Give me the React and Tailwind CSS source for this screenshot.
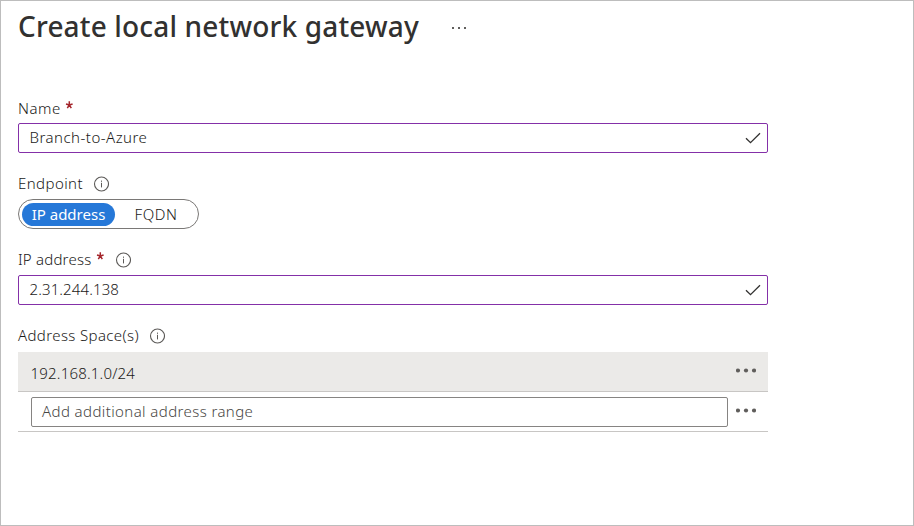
import React from 'react';

function InfoIcon({ className = '' }) {
  return (
    <svg viewBox="0 0 16 16" className={`h-4 w-4 shrink-0 ${className}`} fill="none" stroke="#5c5a58">
      <circle cx="8.5" cy="8" r="7" strokeWidth="1.1" />
      <path d="M8.5 6.8V11.4M8.5 4.6V5.8" strokeWidth="1" />
    </svg>
  );
}

function Required({ className = '' }) {
  return (
    <svg viewBox="0 0 8 8" className={`h-2 w-2 shrink-0 ${className}`} stroke="#a4262c" strokeWidth="1.5">
      <path d="M4.3 0.3V4M4.3 4L1 3M4.3 4L7.6 3M4.3 4L2.3 7.1M4.3 4L6.3 7.1" />
    </svg>
  );
}

function Check() {
  return (
    <svg viewBox="0 0 16 12" className="h-3 w-4 shrink-0" fill="none" stroke="#323130" strokeWidth="1.3">
      <path d="M1 6.2L5.5 10.7L15 1.2" />
    </svg>
  );
}

function MoreButton({ className = '' }) {
  return (
    <button type="button" aria-label="More" className={`h-[5px] w-5 shrink-0 ${className}`}>
      <svg viewBox="0 0 20 5" className="h-[5px] w-5" fill="#605e5c">
        <circle cx="2" cy="2.5" r="2.1" />
        <circle cx="10" cy="2.5" r="2.1" />
        <circle cx="18" cy="2.5" r="2.1" />
      </svg>
    </button>
  );
}

function Field({ children }) {
  return (
    <div className="flex h-[30px] items-center justify-between rounded-[2px] border border-[#8430a8] pr-1.5 pl-[10.5px]">
      {children}
      <Check />
    </div>
  );
}

export default function App() {
  return (
    <main className="h-[526px] w-[914px] overflow-hidden border border-[#bdbdbd] bg-white pl-[17px] font-['Noto_Sans','Open_Sans',sans-serif] text-[15px] leading-5 font-light whitespace-nowrap text-[#1b1a19]">
      <header className="flex h-[52px] items-center">
        <h1 className="w-[434px] pb-0.5 text-[28px] leading-[50px] font-medium tracking-[0.16px] text-[#323130]">Create local network gateway</h1>
        <button type="button" aria-label="More actions" className="mt-0.5 flex gap-1">
          <span className="h-0.5 w-0.5 bg-[#605e5c]" />
          <span className="h-0.5 w-0.5 bg-[#605e5c]" />
          <span className="h-0.5 w-0.5 bg-[#605e5c]" />
        </button>
      </header>
      <form className="w-[750px] pt-[45px]">
        <div className="flex h-[25px]">
          <label className="w-[47px] tracking-[0.55px]">Name</label>
          <Required className="mt-[3px]" />
        </div>
        <Field>
          <span className="pb-0.5 tracking-[0.48px]">Branch-to-Azure</span>
        </Field>
        <div className="flex h-[46px] pt-5">
          <label className="w-[75px] tracking-[0.42px]">Endpoint</label>
          <InfoIcon className="mt-[3px]" />
        </div>
        <div className="flex h-[30px] w-[181px] items-center rounded-full border border-[#7a7876] pl-[3px]">
          <span className="flex h-[23px] w-[93px] items-center justify-center rounded-full bg-[#2678d8] font-normal text-white">IP address</span>
          <span className="ml-[19.5px] tracking-[0.6px]">FQDN</span>
        </div>
        <div className="flex h-[46px] pt-5">
          <label className="w-[78px] tracking-[0.2px]">IP address</label>
          <Required className="mt-[3px]" />
          <InfoIcon className="mt-[3px] ml-[11px]" />
        </div>
        <Field>
          <span className="pb-0.5 tracking-[0.12px]">2.31.244.138</span>
        </Field>
        <div className="flex h-[47px] pt-5">
          <label className="w-[131px] tracking-[0.38px]">Address Space(s)</label>
          <InfoIcon className="mt-[3px]" />
        </div>
        <div className="flex h-10 justify-between border-b border-[#c8c6c4] bg-[#ebeae8] pr-3 pl-[12.5px]">
          <span className="mt-[11px] tracking-[0.2px]">192.168.1.0/24</span>
          <MoreButton className="mt-4" />
        </div>
        <div className="flex h-10 justify-between border-b border-[#c8c6c4] pt-[5px] pr-3 pl-[13px]">
          <div className="flex h-[30px] w-[697px] items-center rounded-[2px] border border-[#868482] pl-2.5 text-[#484644]">
            <span className="pb-0.5 tracking-[0.4px]">Add additional address range</span>
          </div>
          <MoreButton className="mt-[11px]" />
        </div>
      </form>
    </main>
  );
}
